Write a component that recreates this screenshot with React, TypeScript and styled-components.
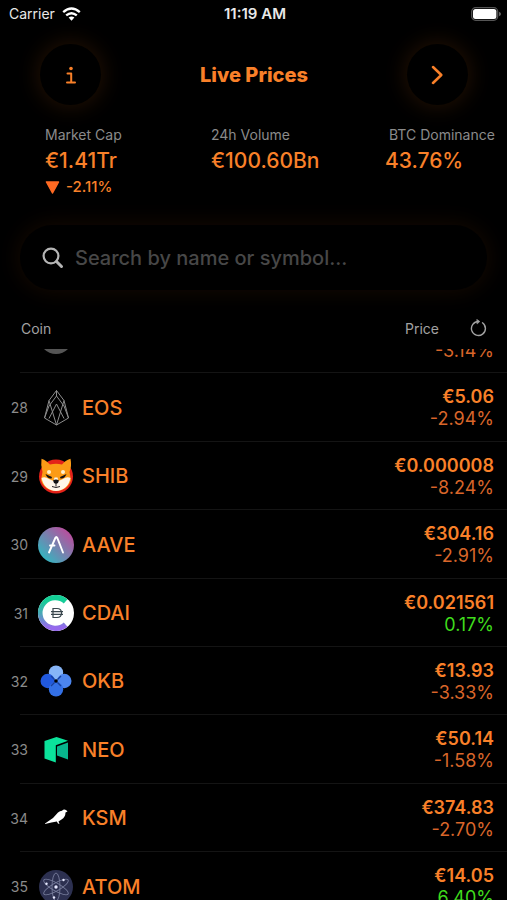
import React from 'react';
import styled, { createGlobalStyle } from 'styled-components';

const ORANGE = '#f98029';

const GlobalStyle = createGlobalStyle`
  * { box-sizing: border-box; }
  body { margin: 0; background: #000; }
  button, input { font: inherit; color: inherit; }
`;

const Screen = styled.div`
  display: flex;
  flex-direction: column;
  height: 100vh;
  overflow: hidden;
  background: #000;
  color: ${ORANGE};
  font-family: Inter, 'Liberation Sans', sans-serif;
`;

const StatusBar = styled.div`
  display: grid;
  grid-template-columns: 1fr auto 1fr;
  align-items: center;
  height: 27px;
  padding: 0 6px 0 9px;
  color: #e8e8e8;
  font-size: 14px;
  flex: none;
`;

const Carrier = styled.div`
  display: flex;
  align-items: center;
  gap: 7px;
`;

const Clock = styled.time`
  font-size: 15px;
  font-weight: 600;
`;

const BatteryIcon = styled.svg`
  justify-self: end;
`;

const Header = styled.header`
  display: flex;
  align-items: center;
  justify-content: space-between;
  padding: 17px 39px 0 40px;
  flex: none;
`;

const RoundButton = styled.button`
  display: grid;
  place-items: center;
  width: 61px;
  height: 61px;
  padding: 0;
  border: 0;
  border-radius: 50%;
  background: #000;
  box-shadow: 0 0 22px 2px rgba(249, 118, 30, 0.14);
`;

const Title = styled.h1`
  margin: 0;
  font-size: 20px;
  font-weight: 800;
`;

const Stats = styled.dl`
  display: grid;
  grid-template-columns: 166fr 174fr 122fr;
  margin: 0;
  padding: 20px 0 0 45px;
  height: 94px;
  flex: none;
`;

const StatLabel = styled.dt<{ $indent?: boolean }>`
  padding-left: ${(p) => (p.$indent ? 4 : 0)}px;
  color: #8b8b8b;
  font-size: 14px;
  line-height: 20px;
  white-space: nowrap;
`;

const StatValue = styled.dd`
  margin: 0;
  font-size: 21px;
  font-weight: 500;
  line-height: 32px;
`;

const StatChange = styled.dd`
  display: flex;
  align-items: center;
  gap: 6px;
  margin: 0;
  font-size: 15px;
  font-weight: 500;
  line-height: 20px;
`;

const SearchBox = styled.label`
  display: flex;
  align-items: center;
  gap: 11px;
  height: 65px;
  margin: 26px 20px 0;
  padding: 0 22px;
  border-radius: 33px;
  background: #000;
  box-shadow: 0 0 22px 2px rgba(249, 118, 30, 0.08);
  flex: none;
`;

const SearchInput = styled.input`
  flex: 1;
  min-width: 0;
  padding: 0;
  border: 0;
  outline: 0;
  background: transparent;
  font-size: 20px;
  font-weight: 500;
  &::placeholder { color: #474747; opacity: 1; }
`;

const ListHeader = styled.div`
  display: flex;
  align-items: center;
  height: 59px;
  padding: 17px 20px 0 21px;
  color: #a2a2a2;
  font-size: 14px;
  flex: none;
`;

const PriceLabel = styled.span`
  margin-left: auto;
`;

const RefreshButton = styled.button`
  display: grid;
  padding: 0;
  margin-left: 31px;
  border: 0;
  background: none;
`;

const ListViewport = styled.main`
  flex: 1;
  min-height: 0;
  overflow: hidden;
`;

const CoinList = styled.ol`
  display: grid;
  grid-auto-rows: 68px 69px 68px 69px 68px;
  margin: -44px 0 0;
  padding: 0;
  list-style: none;
`;

const CoinRow = styled.li`
  display: grid;
  grid-template-columns: 30px 36px 1fr auto;
  align-items: center;
  column-gap: 8px;
  padding-right: 13px;
  background: linear-gradient(#141414, #141414) 20px 100% / 100% 1px no-repeat;
`;

const Rank = styled.span`
  padding-right: 2px;
  color: #8b8b8b;
  font-size: 14px;
  text-align: right;
`;

const Symbol = styled.span`
  font-size: 20px;
  font-weight: 500;
`;

const Quote = styled.div`
  padding-top: 1px;
  text-align: right;
  font-size: 18px;
  line-height: 22px;
`;

const Price = styled.div`
  min-height: 22px;
  font-weight: 600;
`;

const Change = styled.div<{ $up: boolean }>`
  color: ${(p) => (p.$up ? '#3fdc1c' : '#d9662a')};
`;

const CoinSvg = styled.svg`
  display: block;
  width: 36px;
  height: 36px;
`;

const GreyLogo = () => (
  <CoinSvg viewBox="0 0 36 36"><circle cx="18" cy="16" r="17" fill="#555" /></CoinSvg>
);

const EosLogo = () => (
  <CoinSvg viewBox="0 0 36 36" fill="none" stroke="#8d8d8d" strokeWidth="1" strokeLinejoin="round">
    <path d="M18.5 .5 11 10.5 6.5 28 18.5 35 30.5 28 26 10.5Z" />
    <path d="M18.5 6 11 16 6.5 28M18.5 6 26 16 30.5 28M18.5 .5V6" />
    <path d="M11 10.5 18.5 35 26 10.5M11 28.5 18.5 14 26 28.5" />
  </CoinSvg>
);

const ShibLogo = () => (
  <CoinSvg viewBox="0 0 36 36">
    <circle cx="18" cy="18.5" r="17" fill="#e42219" />
    <path d="M3.5 .8C7 2 10 4.5 12 6.5Q18 5 24 6.5C26 4 29 2 32.5 .8Q34 8 31.5 14L33 22C31 29 25 33 18 33S5 29 3 22L4.5 14Q2.5 7 3.5 .8Z" fill="#fb9b16" />
    <path d="M3.5 20Q7 18 11 21L15.5 23 16.5 19.5H19.5L20.5 23 25 21Q29 18 32.5 20C31 28 25 33 18 33S5 28 3.5 20Z" fill="#fff7e8" />
    <circle cx="11" cy="14" r="2" fill="#fff1cf" />
    <circle cx="25" cy="14" r="2" fill="#fff1cf" />
    <path d="m7.5 16 6.5 3-.5 1.5q-4 .5-6-4.500ZM28.500 16l-6.500 3 .5 1.500q4 .5 6-4.500Z" fill="#191411" />
    <path d="M15 22.500q3-2 6 0l-1 2.500-2 1-2-1Z" fill="#111" />
    <path d="M14 28.500q4 2 8 0M18 25.500v3" fill="none" stroke="#252020" />
  </CoinSvg>
);

const AaveLogo = () => (
  <CoinSvg viewBox="0 0 36 36">
    <defs>
      <linearGradient id="aave" x1="1" y1="0" x2="0" y2="1">
        <stop offset=".15" stopColor="#b6509e" /><stop offset=".85" stopColor="#38b3bf" />
      </linearGradient>
    </defs>
    <circle cx="18" cy="18" r="18" fill="url(#aave)" />
    <path d="m11 25.500 6.300-14.500q1-2 2 0l5.700 14.500M12 18.500h4.500" fill="none" stroke="#fff" strokeWidth="1.9" strokeLinecap="round" />
  </CoinSvg>
);

const CdaiLogo = () => (
  <CoinSvg viewBox="0 0 36 36">
    <defs>
      <linearGradient id="cdai" x1="0" y1="0" x2="0" y2="1">
        <stop offset=".15" stopColor="#13cf96" /><stop offset=".5" stopColor="#48a9b5" /><stop offset=".9" stopColor="#9669ed" />
      </linearGradient>
    </defs>
    <circle cx="18" cy="18" r="18" fill="#fff" />
    <path d="M29.500 4.200A18 18 0 1 0 29.500 31.800L25.800 27.600A12.800 12.800 0 1 1 25.800 8.400Z" fill="url(#cdai)" />
    <path d="M15 13.500h4q4.500 0 4.500 4.500t-4.500 4.500h-4ZM13 16.700h12M13 19.300h12" fill="none" stroke="#39464d" strokeWidth="1.200" />
  </CoinSvg>
);

const OkbLogo = () => (
  <CoinSvg viewBox="0 0 36 36">
    <circle cx="18" cy="9.700" r="7.200" fill="#87b5f7" />
    <circle cx="26.300" cy="18" r="7.200" fill="#4c85ee" />
    <circle cx="9.700" cy="18" r="7.200" fill="#2159de" />
    <circle cx="18" cy="26.300" r="7.200" fill="#3370e6" />
    <path d="m13 13 3.500 3.500M23 13l-3.500 3.500M13 23l3.500-3.500M23 23l-3.500-3.500" stroke="#173f9d" strokeWidth="1.400" />
    <circle cx="18" cy="18" r="1.700" fill="#000" />
  </CoinSvg>
);

const NeoLogo = () => (
  <CoinSvg viewBox="0 0 36 36">
    <path d="M6.500 9 18.500 5 30 8.700 17.800 13.300V30.500L6.500 26.500Z" fill="#0be39b" />
    <path d="M30 10.500V27.500L19 23.500V14.500Z" fill="#07b58c" />
  </CoinSvg>
);

const KsmLogo = () => (
  <CoinSvg viewBox="0 0 36 36">
    <path d="M7 23.500 15 18 20 12.500Q22 11 24 10.800Q26 8.500 28.300 10.300L29.500 11.500 27.500 12.500Q27.500 17 23.500 19.500L20.500 21.500 21.500 24 20 23.500 18.800 21.500Q14 22 7 24Z" fill="#fff" />
  </CoinSvg>
);

const AtomLogo = () => (
  <CoinSvg viewBox="0 0 36 36">
    <circle cx="18" cy="18" r="17" fill="#2c3050" />
    <g fill="none" stroke="#777d9c" strokeWidth=".9">
      <ellipse cx="18" cy="18" rx="4" ry="14" />
      <ellipse cx="18" cy="18" rx="4" ry="14" transform="rotate(60 18 18)" />
      <ellipse cx="18" cy="18" rx="4" ry="14" transform="rotate(-60 18 18)" />
    </g>
    <g fill="#e6e9ff"><circle cx="18" cy="18" r="1.700" /><circle cx="25.500" cy="11" r="1.200" /><circle cx="8.500" cy="14.800" r="1.200" /><circle cx="16" cy="28.500" r="1.200" /></g>
  </CoinSvg>
);

type Coin = { rank?: number; symbol?: string; price?: string; change: string; up?: boolean; Logo: React.FC };

const coins: Coin[] = [
  { change: '-3.14%', Logo: GreyLogo },
  { rank: 28, symbol: 'EOS', price: '€5.06', change: '-2.94%', Logo: EosLogo },
  { rank: 29, symbol: 'SHIB', price: '€0.000008', change: '-8.24%', Logo: ShibLogo },
  { rank: 30, symbol: 'AAVE', price: '€304.16', change: '-2.91%', Logo: AaveLogo },
  { rank: 31, symbol: 'CDAI', price: '€0.021561', change: '0.17%', up: true, Logo: CdaiLogo },
  { rank: 32, symbol: 'OKB', price: '€13.93', change: '-3.33%', Logo: OkbLogo },
  { rank: 33, symbol: 'NEO', price: '€50.14', change: '-1.58%', Logo: NeoLogo },
  { rank: 34, symbol: 'KSM', price: '€374.83', change: '-2.70%', Logo: KsmLogo },
  { rank: 35, symbol: 'ATOM', price: '€14.05', change: '6.40%', up: true, Logo: AtomLogo },
];

export default function App() {
  return (
    <Screen>
      <GlobalStyle />
      <StatusBar>
        <Carrier>
          Carrier
          <svg width="19" height="14" viewBox="0 0 19 14" fill="none" stroke="#fff" strokeWidth="2.4">
            <path d="M1.2 5.2Q9.5-2 17.8 5.2M4.2 8.4q5.3-4.4 10.6 0" />
            <path d="M6.6 10.6q2.9-2.4 5.8 0L9.5 13.7Z" fill="#fff" stroke="none" />
          </svg>
        </Carrier>
        <Clock>11:19 AM</Clock>
        <BatteryIcon width="30" height="14" viewBox="0 0 30 14">
          <rect x=".7" y=".7" width="26" height="12.6" rx="4" fill="none" stroke="#555" strokeWidth="1.3" />
          <rect x="2" y="2" width="23.4" height="10" rx="2.5" fill="#fff" />
          <path d="M28 4.8q2 .7 2 2.2t-2 2.2Z" fill="#666" />
        </BatteryIcon>
      </StatusBar>

      <Header>
        <RoundButton aria-label="Information">
          <svg width="12" height="18" viewBox="0 0 12 18" fill="none" stroke={ORANGE} strokeWidth="2" strokeLinecap="round" strokeLinejoin="round">
            <path d="M2.5 7.5H6.2V16.500M2 16.500H10" />
            <circle cx="6" cy="2.500" r="1.800" fill={ORANGE} stroke="none" />
          </svg>
        </RoundButton>
        <Title>Live Prices</Title>
        <RoundButton aria-label="Next">
          <svg width="12" height="20" viewBox="0 0 12 20" fill="none" stroke={ORANGE} strokeWidth="2.5" strokeLinecap="round" strokeLinejoin="round">
            <path d="M2 2 10.3 10 2 18" />
          </svg>
        </RoundButton>
      </Header>

      <Stats>
        <div>
          <StatLabel>Market Cap</StatLabel>
          <StatValue>€1.41Tr</StatValue>
          <StatChange>
            <svg width="15" height="13" viewBox="0 0 15 13" fill="#ff6a22" stroke="#ff6a22" strokeWidth="1.5" strokeLinejoin="round">
              <path d="M1.5 1H13.5L7.5 12Z" />
            </svg>
            -2.11%
          </StatChange>
        </div>
        <div>
          <StatLabel>24h Volume</StatLabel>
          <StatValue>€100.60Bn</StatValue>
        </div>
        <div>
          <StatLabel $indent>BTC Dominance</StatLabel>
          <StatValue>43.76%</StatValue>
        </div>
      </Stats>

      <SearchBox>
        <svg width="22" height="22" viewBox="0 0 22 22" fill="none" stroke="#b5b5b5" strokeLinecap="round">
          <circle cx="9" cy="9" r="7.4" strokeWidth="2.2" />
          <path d="m14.5 14.5 5 5" strokeWidth="3" />
        </svg>
        <SearchInput type="text" aria-label="Search coins" placeholder="Search by name or symbol..." />
      </SearchBox>

      <ListHeader>
        <span>Coin</span>
        <PriceLabel>Price</PriceLabel>
        <RefreshButton aria-label="Refresh prices">
          <svg width="17" height="18" viewBox="0 0 17 18" fill="none" stroke="#a2a2a2" strokeWidth="1.4" strokeLinecap="round">
            <path d="M12.500 3.800A7 7 0 1 1 8.500 2.500" />
            <path d="M7 .5 9.800 2.500 7.300 4.800Z" fill="#a2a2a2" strokeWidth=".6" />
          </svg>
        </RefreshButton>
      </ListHeader>

      <ListViewport>
        <CoinList>
          {coins.map(({ rank, symbol, price, change, up, Logo }) => (
            <CoinRow key={change}>
              <Rank>{rank}</Rank>
              <Logo />
              <Symbol>{symbol}</Symbol>
              <Quote>
                <Price>{price}</Price>
                <Change $up={!!up}>{change}</Change>
              </Quote>
            </CoinRow>
          ))}
        </CoinList>
      </ListViewport>
    </Screen>
  );
}
